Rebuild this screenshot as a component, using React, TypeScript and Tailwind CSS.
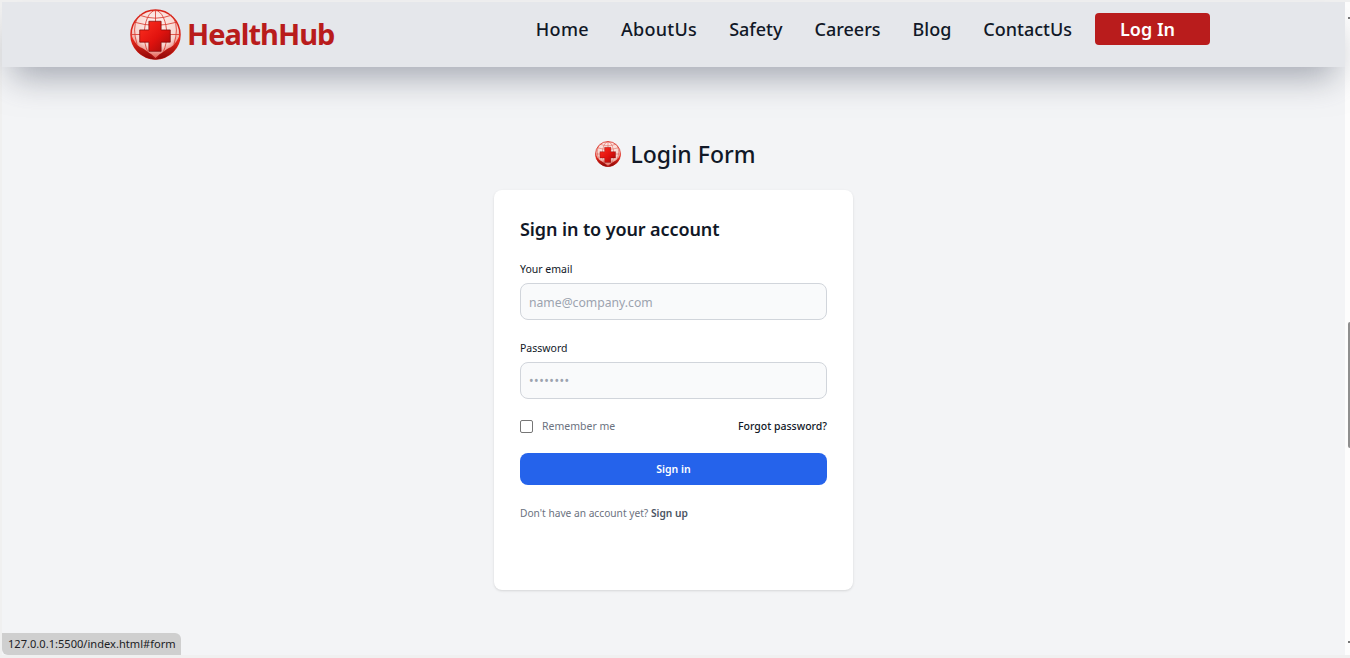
const navLinks = ["Home", "AboutUs", "Safety", "Careers", "Blog", "ContactUs"];

const Logo = ({ className }: { className: string }) => (
  <svg viewBox="0 0 50 50" className={className}>
    <defs>
      <radialGradient id="globe" cx="50%" cy="30%" r="65%">
        <stop offset="0%" stopColor="#fff5f3" />
        <stop offset="70%" stopColor="#f8d4ce" />
        <stop offset="100%" stopColor="#e4685c" />
      </radialGradient>
      <linearGradient id="cross" x1="0" y1="0" x2="1" y2="1">
        <stop offset="0%" stopColor="#ff3020" />
        <stop offset="55%" stopColor="#e0120e" />
        <stop offset="100%" stopColor="#9c0a0a" />
      </linearGradient>
      <linearGradient id="hand" x1="0" y1="0" x2="0" y2="1">
        <stop offset="0%" stopColor="#ff3020" />
        <stop offset="100%" stopColor="#8a0808" />
      </linearGradient>
    </defs>
    <circle cx="25" cy="25" r="24" fill="url(#globe)" stroke="#d8241a" strokeWidth="1.5" />
    {/* globe grid */}
    <g fill="none" stroke="#d8382c" strokeWidth="0.8">
      <ellipse cx="25" cy="25" rx="11" ry="23.5" />
      <path d="M25 1.5v20M4.5 13q20.500 6 41 0M1.500 25h47M9 6q16 6 32 0" />
      <path d="M7 9q-5 10 0 26M43 9q5 10 0 26" />
    </g>
    <path d="M18.500 12h12v8.500h9v12h-9v9h-12v-9h-9v-12h9z" fill="url(#cross)" stroke="#7c0808" strokeWidth="0.7" />
    {/* hands */}
    <path d="M1 25C1 39 12 49 25 49.500 19 44 15 39 10 37.500 6 35 3 30 1 25z" fill="url(#hand)" />
    <path d="M49 25C49 39 38 49 25 49.500 31 44 35 39 40 37.500 44 35 47 30 49 25z" fill="url(#hand)" />
    <path d="M16 42q5 1.500 9 6 4-4.500 9-6-4 4-9 7.500-5-3.500-9-7.500z" fill="#a80c0c" />
  </svg>
);

const Navbar = () => (
  <nav className="relative z-10 flex h-[65px] shrink-0 items-center bg-[#e5e7eb] pr-[135px] pl-[128px] shadow-[0_20px_34px_-10px_rgba(107,114,128,0.6)]">
    <a className="flex items-center gap-[6px]">
      <Logo className="h-[51px] w-[51px]" />
      <span className="mb-[3px] text-[29px] leading-none font-bold tracking-[-1px] text-[#b91c1c]">HealthHub</span>
    </a>
    <div className="mb-[12px] ml-auto flex items-center gap-[32px]">
      {navLinks.map((link, i) => (
        <a key={link} className={i < 2 ? "pt-[2px] text-[18px] font-medium tracking-[0.3px] text-[#111827]" : "pt-[2px] text-[18px] font-medium text-[#111827]"}>
          {link}
        </a>
      ))}
      <a className="-ml-[9px] flex h-[32px] w-[115px] items-center rounded bg-[#b91c1c] pt-[2px] pl-[25px] text-[18px] font-semibold text-white">
        Log In
      </a>
    </div>
  </nav>
);

const LoginCard = () => (
  <div className="flex h-[400px] w-[359px] flex-col rounded-lg bg-white px-[26px] pt-[25px] shadow-sm">
    <h2 className="text-[18px] leading-[28px] font-semibold tracking-[-0.1px] text-[#111827]">Sign in to your account</h2>

    <label className="mt-[18px] text-[10.5px] leading-[16px] text-[#111827]">Your email</label>
    <input
      placeholder="name@company.com"
      className="mt-[6px] h-[37px] w-full rounded-lg border border-[#d1d5db] bg-[#f9fafb] px-[8px] pt-[2px] text-[12.2px] outline-none placeholder:text-[#9ca3af]"
    />

    <label className="mt-[20px] text-[10.5px] leading-[16px] text-[#111827]">Password</label>
    <input
      type="password"
      placeholder="••••••••"
      className="mt-[6px] h-[37px] w-full rounded-lg border border-[#d1d5db] bg-[#f9fafb] px-[8px] text-[12.2px] outline-none placeholder:tracking-[0.5px] placeholder:text-[#9ca3af]"
    />

    <div className="mt-[20px] flex items-center justify-between">
      <label className="flex items-center gap-[9px] text-[10.5px] leading-[14px] text-[#6b7280]">
        <span className="h-[13px] w-[13px] rounded-[2px] border border-[#767676] bg-white" />
        Remember me
      </label>
      <a className="text-[10.5px] leading-[14px] font-medium text-[#111827]">Forgot password?</a>
    </div>

    <button className="mt-[20px] h-[32px] w-full rounded-lg bg-[#2563eb] pt-[1px] text-[10.5px] font-semibold text-white">
      Sign in
    </button>

    <p className="mt-[20px] text-[10.2px] leading-[16px] text-[#6b7280]">
      Don't have an account yet? <a className="font-semibold text-[#4b5563]">Sign up</a>
    </p>
  </div>
);

export default function App() {
  return (
    <div className="relative flex h-[658px] w-[1350px] flex-col overflow-hidden bg-[#f0f0f0] pt-[2px] pb-[3px] pl-[2px] font-['Noto_Sans',sans-serif]">
      <div className="flex min-h-0 flex-1">
        <main className="flex min-w-0 flex-1 flex-col bg-[#f3f4f6]">
          <Navbar />
          <section className="flex flex-col items-center pt-[73px]">
            <div className="flex h-[28px] items-center gap-[10px] pl-[3px]">
              <Logo className="h-[26px] w-[26px]" />
              <h1 className="text-[23px] leading-[32px] font-medium text-[#111827]">Login Form</h1>
            </div>
            <div className="mt-[22px]">
              <LoginCard />
            </div>
          </section>
        </main>

        {/* browser scrollbar */}
        <div className="relative w-[5px] shrink-0 bg-[#fdfdfd]">
          <div className="absolute top-[320px] right-0 h-[126px] w-[2px] rounded-l-sm bg-[#8f8f8f]" />
          <span className="absolute top-[15px] right-0 h-[2px] w-[2px] bg-[#777777]" />
          <span className="absolute right-0 bottom-[12px] h-[2px] w-[2px] bg-[#777777]" />
        </div>
      </div>

      {/* link hover status */}
      <div className="absolute bottom-[3px] left-[2px] flex h-[22px] w-[179px] items-center rounded-tr-md rounded-bl-md bg-[#cfcfcf] pl-[6px] text-[11.1px] text-[#202124]">
        127.0.0.1:5500/index.html#form
      </div>
    </div>
  );
}
